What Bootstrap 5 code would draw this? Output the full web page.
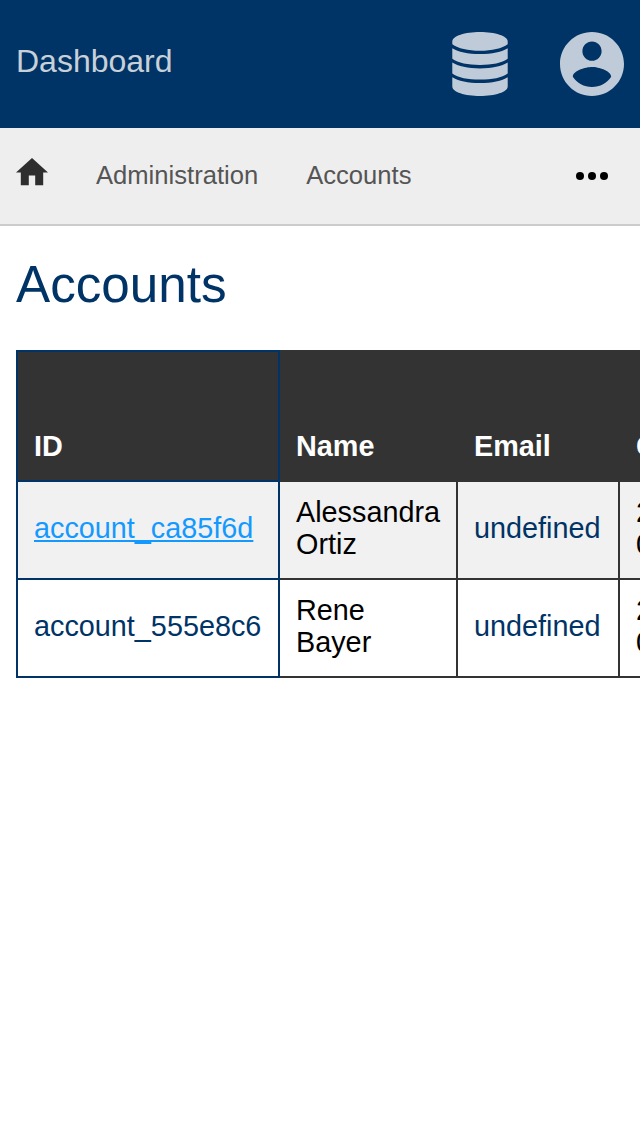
<!DOCTYPE html>
<html lang="en">
<head>
<meta charset="utf-8">
<meta name="viewport" content="width=device-width, initial-scale=1">
<title>Accounts</title>
<link href="https://cdn.jsdelivr.net/npm/bootstrap@5.3.0/dist/css/bootstrap.min.css" rel="stylesheet">
<style>
  body { font-family: "Liberation Sans", Arial, sans-serif; color: #000; background: #fff; overflow-x: hidden; }
  svg { display: block; flex: none; }
  .topbar { height: 128px; background: #036; padding: 0 16px; color: rgba(255,255,255,.75); }
  .topbar .title { font-size: 32px; line-height: 36px; color: rgba(238,238,238,.85); margin-top: -6px; }
  .topbar .tools { gap: 52px; }
  .crumbs { height: 98px; background: #eee; border-bottom: 2px solid #ccc; padding: 0 32px 0 16px; font-size: 25.6px; line-height: 30px; }
  .crumbs ol { gap: 48px; margin-top: -2px; }
  .crumbs a { color: #555; }
  .crumbs .home { color: #2e2e2e; margin-top: -6px; }
  h1 { font-size: 51.2px; line-height: 60px; color: #036; padding: 29px 16px 0; margin: 0 0 35px; font-weight: 400; }
  .table-scroll { margin-left: 16px; overflow: hidden; }
  .accounts { width: 804px; table-layout: fixed; border-collapse: collapse; font-size: 28.8px; line-height: 32px; }
  .accounts th, .accounts td { border: 2px solid #333; padding: 14px 16px 18px; }
  .accounts th { background: #333; color: #fff; height: 130px; vertical-align: bottom; }
  .accounts td { height: 98px; vertical-align: middle; }
  .accounts tbody tr:first-child { background: #f1f1f1; }
  .accounts tr > :first-child { border-color: #036; }
  .accounts a { color: #036; text-decoration: none; }
  .accounts a.current { color: #1499ff; text-decoration: underline; }
</style>
</head>
<body>
<header class="topbar d-flex align-items-center justify-content-between">
  <div class="title">Dashboard</div>
  <div class="tools d-flex align-items-center">
    <svg width="56" height="64" viewBox="0 0 56 64" fill="currentColor" aria-label="Database">
      <path d="M28 0C43 0 55.700 4 55.700 9.500V12.200C50 16.500 40 18.700 28 18.700S6 16.500.3 12.200V9.500C.3 4 13 0 28 0z"/>
      <path d="M.3 16.200C6 20 16 22 28 22s22-2 27.700-5.800V26.800C50 31 40 33 28 33S6 31 .3 26.800z"/>
      <path d="M.3 30.600C6 34.400 16 36.400 28 36.400s22-2 27.700-5.800V41.400C50 45.600 40 47.600 28 47.600S6 45.600.3 41.400z"/>
      <path d="M.3 45.200C6 49 16 51 28 51s22-2 27.700-5.800V54.500C55.700 60 43 64 28 64S.3 60 .3 54.500z"/>
    </svg>
    <svg width="64" height="64" viewBox="2 2 20 20" fill="currentColor" aria-label="Profile"><path d="M12 2C6.480 2 2 6.480 2 12s4.480 10 10 10 10-4.480 10-10S17.520 2 12 2zm0 3c1.660 0 3 1.340 3 3s-1.340 3-3 3-3-1.340-3-3 1.340-3 3-3zm0 14.200c-2.500 0-4.710-1.280-6-3.220.030-1.990 4-3.080 6-3.080 1.990 0 5.970 1.090 6 3.080-1.290 1.940-3.500 3.220-6 3.220z"/></svg>
  </div>
</header>
<nav class="crumbs d-flex align-items-center justify-content-between">
  <ol class="list-unstyled d-flex align-items-center mb-0">
    <li><a href="#" aria-label="Home"><svg class="home" width="32" height="27.200" viewBox="2 3 20 17" fill="currentColor"><path d="M10 20v-6h4v6h5v-8h3L12 3 2 12h3v8z"/></svg></a></li>
    <li><a href="#" class="text-decoration-none">Administration</a></li>
    <li><a href="#" class="text-decoration-none">Accounts</a></li>
  </ol>
  <svg width="32" height="8" viewBox="0 0 32 8" aria-label="More"><circle cx="4" cy="4" r="4"/><circle cx="16" cy="4" r="4"/><circle cx="28" cy="4" r="4"/></svg>
</nav>
<main>
  <h1>Accounts</h1>
  <div class="table-scroll">
    <table class="accounts">
      <colgroup><col style="width:262px"><col style="width:178px"><col style="width:162px"><col style="width:200px"></colgroup>
      <thead><tr><th>ID</th><th>Name</th><th>Email</th><th>Created</th></tr></thead>
      <tbody>
        <tr><td><a href="#" class="current">account_ca85f6d</a></td><td>Alessandra Ortiz</td><td><a href="#">undefined</a></td><td>2020<br>08:00</td></tr>
        <tr><td><a href="#">account_555e8c6</a></td><td>Rene<br>Bayer</td><td><a href="#">undefined</a></td><td>2020<br>08:00</td></tr>
      </tbody>
    </table>
  </div>
</main>
<script src="https://cdn.jsdelivr.net/npm/bootstrap@5.3.0/dist/js/bootstrap.bundle.min.js"></script>
</body>
</html>
